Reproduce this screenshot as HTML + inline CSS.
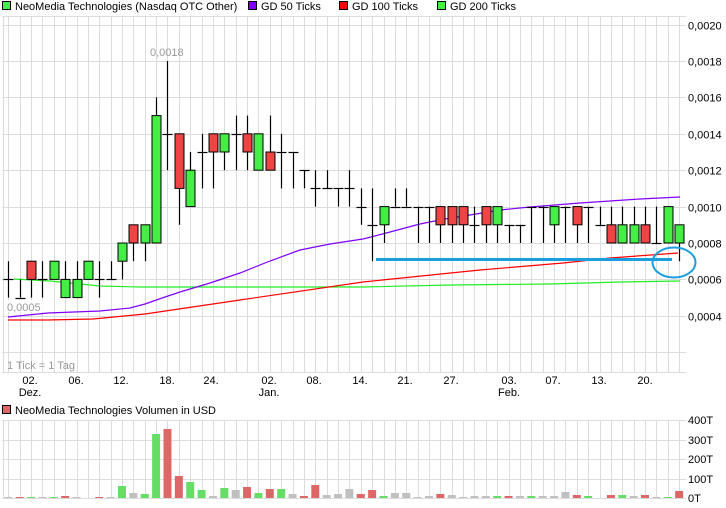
<!DOCTYPE html>
<html><head><meta charset="utf-8"><style>
html,body{margin:0;padding:0;background:#fff;width:726px;height:508px;overflow:hidden}
svg{display:block;font-family:"Liberation Sans",sans-serif}
</style></head><body>
<svg id="s" width="726" height="508" xmlns="http://www.w3.org/2000/svg">
<rect width="726" height="508" fill="#fff"/>
<g font-size="11" fill="#000">
<rect x="2.5" y="1.5" width="8" height="8" fill="#44ee44" stroke="#000"/><text x="15" y="10">NeoMedia Technologies (Nasdaq OTC Other)</text>
<rect x="248.5" y="1.5" width="8" height="8" fill="#7f00ff" stroke="#000"/><text x="261" y="10">GD 50 Ticks</text>
<rect x="339.5" y="1.5" width="8" height="8" fill="#ff0000" stroke="#000"/><text x="352" y="10">GD 100 Ticks</text>
<rect x="437.5" y="1.5" width="8" height="8" fill="#44ee44" stroke="#000"/><text x="450" y="10">GD 200 Ticks</text>
<rect x="2.5" y="405.5" width="8" height="8" fill="#dd6666" stroke="#000"/><text x="15" y="414">NeoMedia Technologies Volumen in USD</text>
</g>
<g id="g"></g>
</svg>
<script>
var g=document.getElementById('g'),h='';
function X(i){return 8.3+11.37*i}
function Y(p){return 243-(p-8)*18.2}
var gx=[2.5];for(var i=0;i<60;i++)gx.push(X(i));
gx.forEach(function(x){x=Math.round(x)+0.5;h+='<line x1="'+x+'" y1="16" x2="'+x+'" y2="372" stroke="#dcdcdc"/>';h+='<line x1="'+x+'" y1="420" x2="'+x+'" y2="498" stroke="#dcdcdc"/>';});
h+='<line x1="2" y1="16.5" x2="686" y2="16.5" stroke="#dcdcdc"/>';
var labs=['0,0020','0,0018','0,0016','0,0014','0,0012','0,0010','0,0008','0,0006','0,0004'];
for(var k=0;k<10;k++){var y=Math.round(243-36.4*(6-k))+0.5;h+='<line x1="2" y1="'+y+'" x2="686" y2="'+y+'" stroke="#dcdcdc"/>';if(k<9)h+='<text x="688" y="'+(y+4)+'" font-size="11">'+labs[k]+'</text>';}
h+='<line x1="2" y1="372.5" x2="686" y2="372.5" stroke="#dcdcdc"/>';
[420,440,459,479,498].forEach(function(y,k){h+='<line x1="2" y1="'+(y+0.5)+'" x2="686" y2="'+(y+0.5)+'" stroke="#dcdcdc"/>';h+='<text x="688" y="'+(y+4)+'" font-size="11">'+['400T','300T','200T','100T','0T'][k]+'</text>';});
function pl(pts,c){h+='<polyline fill="none" stroke="'+c+'" stroke-width="1.2" points="'+pts+'"/>';}
pl('14,279 50,281 100,286 140,287 240,287 363,287 450,285 550,284 620,282 680,281','#22ee22');
pl('8,320 48,320 93,319 145,314 240,300 363,282 480,270 563,263 610,258 678,253','#ff0000');
pl('8,317 48,313 100,311 130,308 145,304 165,297 180,292 210,283 240,273 270,261 300,250 330,244 363,239 390,232 420,224 445,219 470,215 500,210 530,207 580,203 640,199 680,197','#7f00ff');
var d=[[6,7,5,6],[5,6,5,5],[7,7,5,6],[6,7,5,6],[6,7,6,7],[5,7,5,6],[5,7,5,6],[6,7,6,7],[6,7,5,6],[6,7,6,6],
[7,8,6,8],[9,9,7,8],[8,9,7,9],[8,16,8,15],[14,18,12,14],[14,14,9,11],[10,13,10,12],[13,14,11,13],[14,14,11,13],[13,14,12,14],
[14,15,12,14],[14,15,12,13],[12,14,12,14],[13,15,12,12],[13,14,11,13],[13,13,11,13],[12,12,11,12],[11,12,10,11],[11,12,11,11],[11,11,10,11],
[11,12,10,11],[10,11,9,10],[9,11,7,9],[9,10,8,10],[10,11,10,10],[10,11,10,10],[10,10,8,10],[10,10,8,10],[10,10,8,9],[10,10,8,9],
[10,10,8,9],[9,10,8,9],[10,10,8,9],[9,10,8,10],[9,9,8,9],[9,9,8,9],[10,10,8,10],[10,10,8,10],[9,10,8,10],[10,10,8,10],
[10,10,8,9],[10,10,8,10],[9,10,9,9],[9,10,8,8],[8,10,8,9],[8,10,8,9],[9,10,8,8],[8,10,8,8],[8,10,8,10],[8,9,7,9]];
d.forEach(function(c,i){var x=Math.round(X(i))+0.5;h+='<line x1="'+x+'" y1="'+Y(c[1])+'" x2="'+x+'" y2="'+Y(c[2])+'" stroke="#000" stroke-width="1.2"/>';
if(c[0]==c[3]){var y=Math.round(Y(c[0]))+0.5;h+='<line x1="'+(x-5)+'" y1="'+y+'" x2="'+(x+5)+'" y2="'+y+'" stroke="#000" stroke-width="1.2"/>';}
else{var t=Y(Math.max(c[0],c[3])),b=Y(Math.min(c[0],c[3]));h+='<rect x="'+(x-4.5)+'" y="'+t+'" width="9" height="'+(b-t)+'" fill="'+(c[3]>c[0]?'#44ee44':'#ee4444')+'" stroke="#000" stroke-width="1"/>';}});
var v=[['n',1],['r',1],['g',1],['n',1],['g',1],['r',2],['n',1],['n',0],['r',1],['n',1],
['g',12],['n',5],['g',4],['g',64],['r',69],['r',22],['g',16],['g',8],['n',2],['g',10],
['n',8],['r',11],['g',5],['r',9],['g',9],['n',4],['r',2],['r',13],['n',3],['n',4],
['n',9],['r',4],['r',8],['g',2],['n',5],['n',5],['n',1],['n',2],['r',4],['n',3],
['n',1],['n',2],['n',2],['g',2],['r',2],['n',2],['g',2],['n',2],['n',2],['n',6],
['r',3],['g',2],['n',0],['r',3],['g',3],['n',2],['r',3],['n',1],['g',1],['r',7]];
var gc={n:'#c0c0c0',r:'#dd6666',g:'#66dd66'};
v.forEach(function(b,i){if(!b[1])return;var x=X(i);h+='<rect x="'+(x-4)+'" y="'+(498-b[1])+'" width="8" height="'+b[1]+'" fill="'+gc[b[0]]+'"/>';});
h+='<text x="150" y="56" font-size="11" fill="#999">0,0018</text>';
h+='<rect x="6" y="300" width="38" height="12" fill="#fff" opacity="0.8"/><text x="7" y="311" font-size="11" fill="#999">0,0005</text>';
h+='<text x="7" y="369" font-size="11" fill="#999">1 Tick = 1 Tag</text>';
var xl=[[30,'02.','Dez.'],[76,'06.'],[121,'12.'],[167,'18.'],[211,'24.'],[269,'02.','Jan.'],[314,'08.'],[360,'14.'],[405,'21.'],[451,'27.'],[509,'03.','Feb.'],[553,'07.'],[599,'13.'],[645,'20.']];
xl.forEach(function(l){h+='<text x="'+l[0]+'" y="384" font-size="11" text-anchor="middle">'+l[1]+'</text>';if(l[2])h+='<text x="'+l[0]+'" y="396" font-size="11" text-anchor="middle">'+l[2]+'</text>';});
h+='<line x1="376" y1="259.5" x2="672" y2="259.5" stroke="#1a9ee0" stroke-width="3"/>';
h+='<ellipse cx="674" cy="262.5" rx="21.5" ry="15" fill="none" stroke="#1a9ee0" stroke-width="2"/>';
g.innerHTML=h;
</script>
</body></html>
